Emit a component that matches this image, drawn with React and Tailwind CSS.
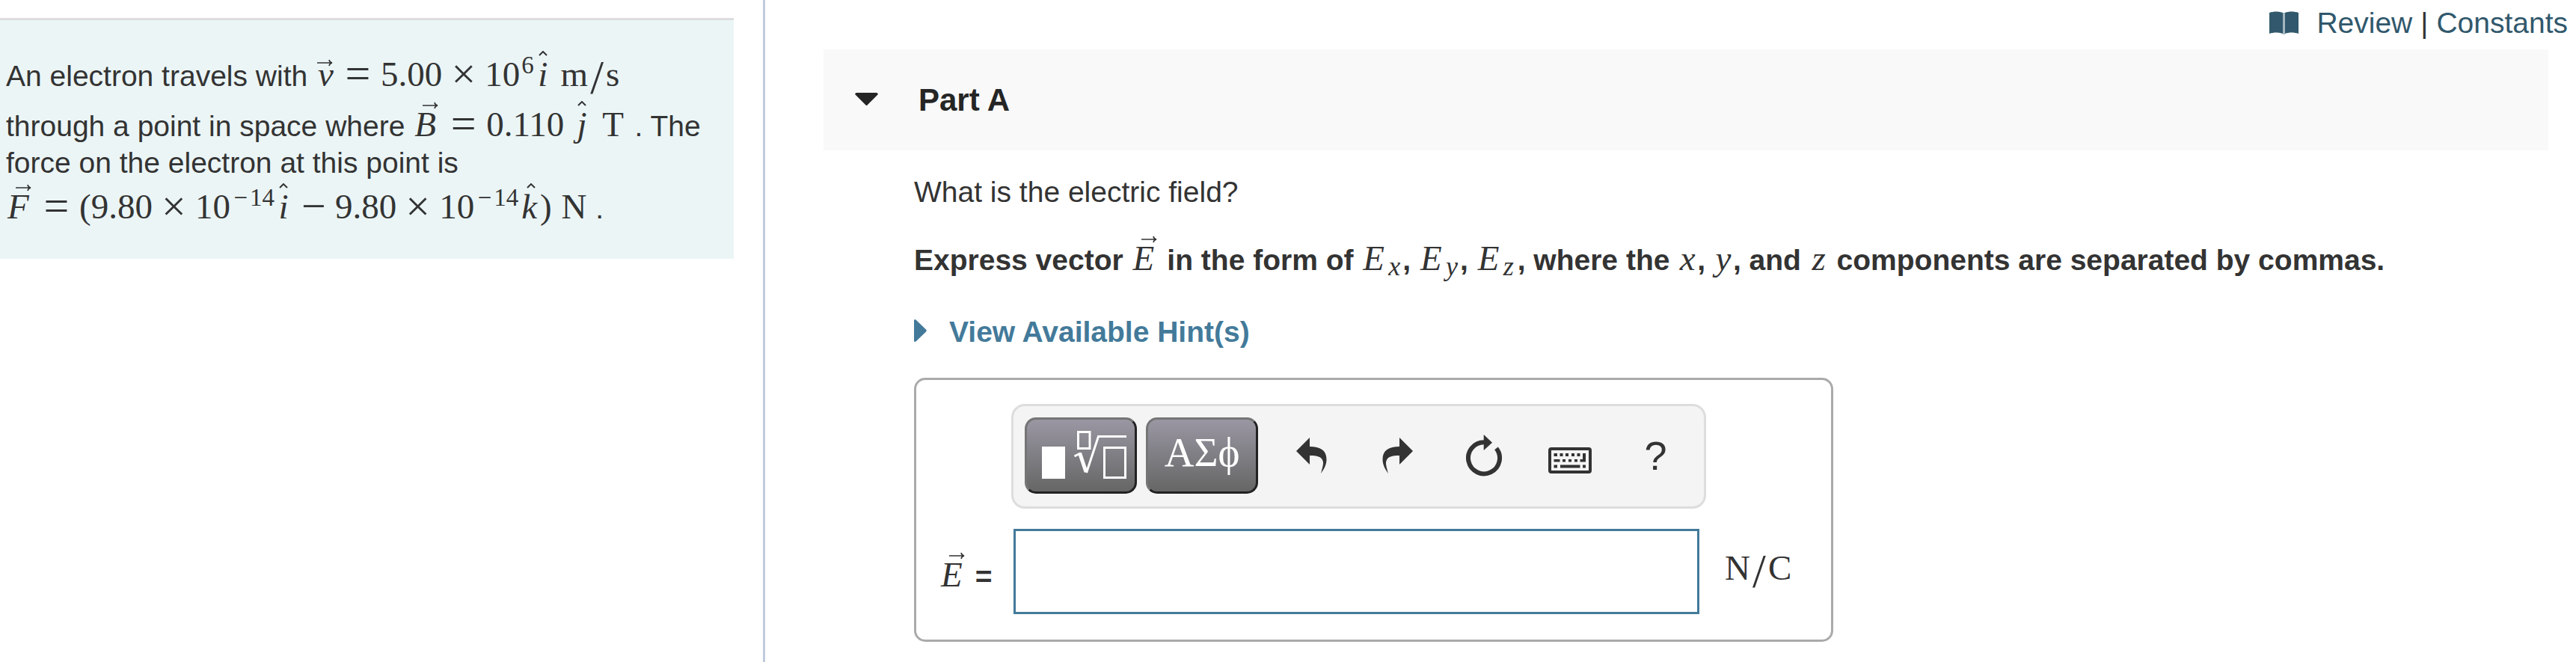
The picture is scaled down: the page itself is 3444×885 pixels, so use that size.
import React, { useState } from 'react';

const Arrow = ({ className }) => (
  <svg viewBox="0 0 21 10" className={`absolute right-[3px] h-[10px] w-[21px] ${className}`} fill="none" stroke="currentColor" strokeWidth="1.6" aria-hidden="true">
    <path d="M0 5H20M16 1C16.5 3.5 18 4.6 20 5C18 5.4 16.5 6.5 16 9" />
  </svg>
);

const Hat = () => (
  <svg viewBox="0 0 12 7" className="absolute -top-[5px] right-[2px] h-[7px] w-[12px]" fill="none" stroke="currentColor" strokeWidth="2" aria-hidden="true">
    <path d="M1 6L6 1L11 6" />
  </svg>
);

const Formula = ({ children }) => (
  <span className="inline-block pt-2 font-['Liberation_Serif',serif] text-[47px] leading-[52px] font-normal whitespace-nowrap">{children}</span>
);

// vectors named by a capital letter carry the arrow above the cap height
const Vec = ({ children }) => (
  <span className="relative inline-block w-[37px] pl-[2px] italic">
    <Arrow className="-top-[4px]" />
    {children}
  </span>
);

const SmallVec = ({ children }) => (
  <span className="relative inline-block w-[26px] pl-[3px] italic">
    <Arrow className="top-[6px]" />
    {children}
  </span>
);

const Unit = ({ children }) => (
  <span className="relative mx-[4px] inline-block min-w-[16px] text-center italic">
    <Hat />
    {children}
  </span>
);

const Op = ({ children }) => <span className="inline-block w-[57px] text-center align-[-3px] text-[58px] leading-[40px]">{children}</span>;
const Rel = () => <span className="inline-block w-[61px] text-center align-[-3px] text-[60px] leading-[40px]">=</span>;
const Sup = ({ children }) => <span className="ml-[2px] inline-block align-[17px] text-[33px] leading-[24px]">{children}</span>;
const Slash = () => <span className="inline-block w-[24px] text-center align-[-10px] text-[64px] leading-[56px]">/</span>;
const Minus = () => <span className="inline-block w-[24px] text-center">−</span>;
const Roman = ({ children }) => <span className="inline-block w-[36px] text-center">{children}</span>;

const Component = ({ axis }) => (
  <Formula>
    <span className="inline-block w-[34px] pl-[2px] italic">E</span>
    <span className="inline-block w-[21px] pl-[2px] align-[-7px] text-[36px] leading-[24px] italic">{axis}</span>
  </Formula>
);

const Axis = ({ children }) => (
  <Formula><span className="inline-block w-[26px] text-center italic">{children}</span></Formula>
);

const BookIcon = () => (
  <svg viewBox="0 0 39 31" className="h-[31px] w-[39px]" aria-hidden="true">
    <path d="M0 2C6 0 13 0 18 2V30C13 28 6 28 0 30Z" fill="#31586c" />
    <path d="M21 2C26 0 33 0 39 2V30C33 28 26 28 21 30Z" fill="#31586c" />
    <path d="M18 2H21V31H18Z" fill="#a3b6c0" />
  </svg>
);

const TemplatesIcon = () => (
  <svg viewBox="-10 0 130 70" className="h-[70px] w-[130px]" fill="none" stroke="#fff" strokeWidth="3" aria-hidden="true">
    <path d="M3 23H34V66H3Z" fill="#fff" stroke="none" />
    <path d="M51.5 3.5H67V25.5H51.5Z" />
    <path d="M86.5 24.5H114.5V64.5H86.5Z" />
    <path d="M46.5 36L54 32" />
    <path d="M53.5 31.5L62 57" strokeWidth="5" />
    <path d="M62.5 58L78.5 9.5H116" />
  </svg>
);

const UndoIcon = () => (
  <svg viewBox="0 0 41 48" className="h-[48px] w-[41px]" fill="currentColor" aria-hidden="true">
    <path d="M0 18L18 0V12C32 12 40.5 17 40.5 29C40.5 37 36.5 43 33 48C35 40 37 35 35.5 31C33.5 25.5 28 24 18 24V36Z" />
  </svg>
);

const RedoIcon = () => (
  <svg viewBox="0 0 41 48" className="h-[48px] w-[41px]" fill="currentColor" aria-hidden="true">
    <path d="M41 18L23 0V12C9 12 0.5 17 0.5 29C0.5 37 4.5 43 8 48C6 40 4 35 5.5 31C7.5 25.5 13 24 23 24V36Z" />
  </svg>
);

const ResetIcon = () => (
  <svg viewBox="0 0 48 56" className="h-[56px] w-[48px]" aria-hidden="true">
    <path d="M40.5 18.3A21 21 0 1 1 24 10.3" fill="none" stroke="currentColor" strokeWidth="6" />
    <path d="M23.7 0L35 10.7L23.7 21Z" fill="currentColor" />
  </svg>
);

const KeyboardIcon = () => (
  <svg viewBox="0 -14 58 50" className="h-[50px] w-[58px]" fill="currentColor" aria-hidden="true">
    <rect x="2" y="2" width="54" height="31" rx="2" fill="none" stroke="currentColor" strokeWidth="4" />
    <path d="M7.5 8H12V12H7.5ZM15.5 8H19.5V12H15.5ZM23 8H27V12H23ZM31 8H35V12H31ZM38.5 8H42.5V12H38.5Z" />
    <path d="M46 8H50V19.5H42.5V16H46ZM7.5 16H15.5V19.5H7.5ZM19 16H23V19.5H19ZM27 16H31V19.5H27ZM35 16H39V19.5H35Z" />
    <path d="M7.5 23.5H12V27.5H7.5ZM16 23.5H42.5V27.5H16ZM46 23.5H50V27.5H46Z" />
  </svg>
);

const paletteButton =
  'flex h-[102px] w-[150px] items-center justify-center rounded-[15px] border-3 border-t-[#757575] border-r-[#222] border-b-[#222] border-l-[#757575] bg-linear-to-b from-[#9a97a3] to-[#666] text-white';
const toolButton = 'flex h-[102px] w-[115px] items-center justify-center';

const tools = [
  { name: 'Undo', icon: <UndoIcon /> },
  { name: 'Redo', icon: <RedoIcon /> },
  { name: 'Reset', icon: <ResetIcon /> },
  { name: 'Keyboard shortcuts', icon: <KeyboardIcon /> },
  { name: 'Help', icon: <span className="text-[54px] leading-[60px]">?</span> },
];

const Problem = () => (
  <aside className="border-r-3 border-[#bfcbdc] pt-6 pr-[39px]">
    <p className="border-t-3 border-[#ddd] bg-[#ebf5f6] pt-[38px] pr-6 pb-[43px] pl-2">
      An electron travels with{' '}
      <Formula>
        <SmallVec>v</SmallVec><Rel />5.00<Op>×</Op>10<Sup>6</Sup><Unit>i</Unit> m<Slash />s
      </Formula>{' '}
      through a point in space where{' '}
      <Formula>
        <Vec>B</Vec><Rel />0.110 <Unit>j</Unit> <Roman>T</Roman>
      </Formula>{' '}
      . The{' '}
      force on the electron at this point is{' '}
      <Formula>
        <Vec>F</Vec><Rel />(9.80<Op>×</Op>10<Sup><Minus />14</Sup><Unit>i</Unit><Op>−</Op>9.80<Op>×</Op>10<Sup><Minus />14</Sup><Unit>k</Unit>) <Roman>N</Roman>
      </Formula>{' '}
      .
    </p>
  </aside>
);

const AnswerBox = () => {
  const [answer, setAnswer] = useState('');

  return (
    <div className="mt-[37px] w-[1229px] max-w-full rounded-[15px] border-3 border-[#aaa] pt-8 pb-[34px]">
      <div className="ml-[127px] flex w-[929px] rounded-[18px] border-3 border-[#ddd] bg-[#f4f4f4] pt-[15px] pb-[17px] pl-[15px]">
        <div className="mr-[14px] flex gap-3">
          <button type="button" aria-label="Templates" className={paletteButton}><TemplatesIcon /></button>
          <button type="button" className={paletteButton}>
            <span className="pb-2 font-['Liberation_Serif',serif] text-[55px] leading-[60px]">ΑΣϕ</span>
          </button>
        </div>
        {tools.map((tool) => (
          <button key={tool.name} type="button" aria-label={tool.name} className={toolButton}>{tool.icon}</button>
        ))}
      </div>
      <div className="mt-[27px] flex items-center">
        <label htmlFor="answer" className="w-[130px] pl-[31px] font-bold whitespace-nowrap">
          <Formula><Vec>E</Vec></Formula> =
        </label>
        <input
          id="answer"
          type="text"
          value={answer}
          onChange={(e) => setAnswer(e.target.value)}
          className="h-[114px] w-[917px] border-3 border-[#437a9a] bg-white px-4 outline-none"
        />
        <span className="ml-[34px] pb-3"><Formula>N<Slash />C</Formula></span>
      </div>
    </div>
  );
};

const App = () => {
  const [open, setOpen] = useState(true);

  return (
    <div className="grid min-h-screen grid-cols-[1023fr_2421fr] bg-white font-['Liberation_Sans',Arial,sans-serif] text-[39px] leading-[49px] text-[#333]">
      <Problem />
      <main className="pt-[6px]">
        <nav className="flex items-center justify-end pr-[11px]">
          <a href="#review" className="flex items-center gap-6 text-[#31586c]"><BookIcon />Review</a>
          <span className="mx-[11px]">|</span>
          <a href="#constants" className="text-[#31586c]">Constants</a>
        </nav>
        <section className="mt-[11px] mr-[37px] ml-[78px]">
          <h2>
            <button type="button" onClick={() => setOpen(!open)} className="flex h-[135px] w-full items-center gap-[54px] bg-[#f9f9f9] pl-[42px] text-left text-[42px] font-bold text-[#252525]">
              <svg viewBox="0 0 31 20" className="h-[20px] w-[31px]" fill="currentColor" aria-hidden="true">
                <path d="M2 0H29Q32 1 30 3L16.5 16.5Q15.5 17.5 14.5 16.5L1 3Q-1 1 2 0Z" />
              </svg>
              Part A
            </button>
          </h2>
          {open && (
            <div className="pt-[31px] pl-[121px]">
              <p>What is the electric field?</p>
              <p className="mt-[30px] font-bold">
                Express vector <Formula><Vec>E</Vec></Formula> in the form of <Component axis="x" />, <Component axis="y" />, <Component axis="z" />, where the{' '}
                <Axis>x</Axis>, <Axis>y</Axis>, and <Axis>z</Axis> components are separated by commas.
              </p>
              <button type="button" className="mt-[47px] flex items-center gap-[30px] font-bold text-[#437a9a]">
                <svg viewBox="0 0 17 34" className="h-[34px] w-[17px]" fill="currentColor" aria-hidden="true">
                  <path d="M0 1Q1 -1 3 1L16 13.5Q17.5 15 16 16.5L3 29Q1 31 0 29Z" />
                </svg>
                View Available Hint(s)
              </button>
              <AnswerBox />
            </div>
          )}
        </section>
      </main>
    </div>
  );
};

export default App;
